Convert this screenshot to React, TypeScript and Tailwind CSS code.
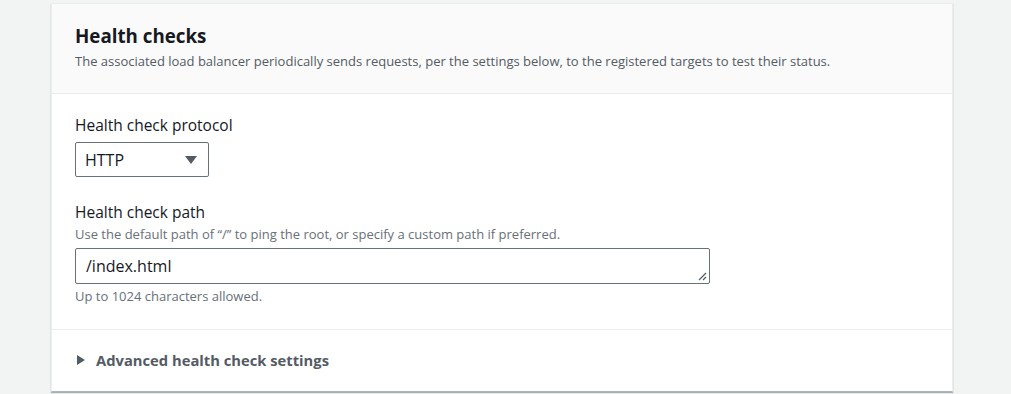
import React from "react";

const HealthChecks = () => {
  return (
    <div className="min-h-[394px] bg-[#f2f3f3] pt-[3px] pl-[51px] font-['Open_Sans',sans-serif] text-[#16191f]">
      <div className="w-[902px] border border-[#eaeded] border-b-[#aab7b8] bg-white shadow-[0_1px_1px_0_rgba(0,28,36,0.3)]">
        <div className="border-b border-[#eaeded] bg-[#fafafa] px-[23px] pt-5 pb-6">
          <h2 className="text-[18.75px] font-bold leading-6">Health checks</h2>
          <p className="mt-[5px] text-[13px] leading-4 text-[#545b64]">
            The associated load balancer periodically sends requests, per the settings below, to the registered targets to test their status.
          </p>
        </div>

        <div className="border-b border-[#eaeded] px-[23px] pt-[21px] pb-[25px]">
          <label className="block text-[15.5px] leading-5">Health check protocol</label>
          <div className="mt-[7px] flex h-[35px] w-[134px] items-center justify-between rounded-[2px] border border-[#687078] pl-[9px] pr-[11px]">
            <span className="text-[16px]">HTTP</span>
            <svg width="12" height="8" viewBox="0 0 12 8">
              <path d="M0 0h12L6 8z" fill="#545b64" />
            </svg>
          </div>

          <label className="mt-[25px] block text-[15.5px] leading-5">Health check path</label>
          <p className="mt-[4px] text-[13px] leading-4 text-[#687078]">
            Use the default path of “/” to ping the root, or specify a custom path if preferred.
          </p>
          <div className="relative mt-[6px] flex h-[36px] w-[635px] items-center rounded-[2px] border border-[#687078] pl-[10px]">
            <span className="text-[16px]">/index.html</span>
            <svg className="absolute right-[2px] bottom-[2px]" width="10" height="10" viewBox="0 0 10 10">
              <path d="M2 9L9 2M6 9L9 6" stroke="#545b64" strokeWidth="1.2" />
            </svg>
          </div>
          <p className="mt-[4px] text-[13px] leading-4 text-[#687078]">Up to 1024 characters allowed.</p>
        </div>

        <div className="flex items-center gap-[11px] px-[23px] pt-5 pb-[21px]">
          <svg className="ml-[2px]" width="8" height="10" viewBox="0 0 8 10">
            <path d="M0 0L8 5L0 10z" fill="#545b64" />
          </svg>
          <span className="text-[14.75px] font-bold leading-5 text-[#545b64]">Advanced health check settings</span>
        </div>
      </div>
    </div>
  );
};

export default HealthChecks;
